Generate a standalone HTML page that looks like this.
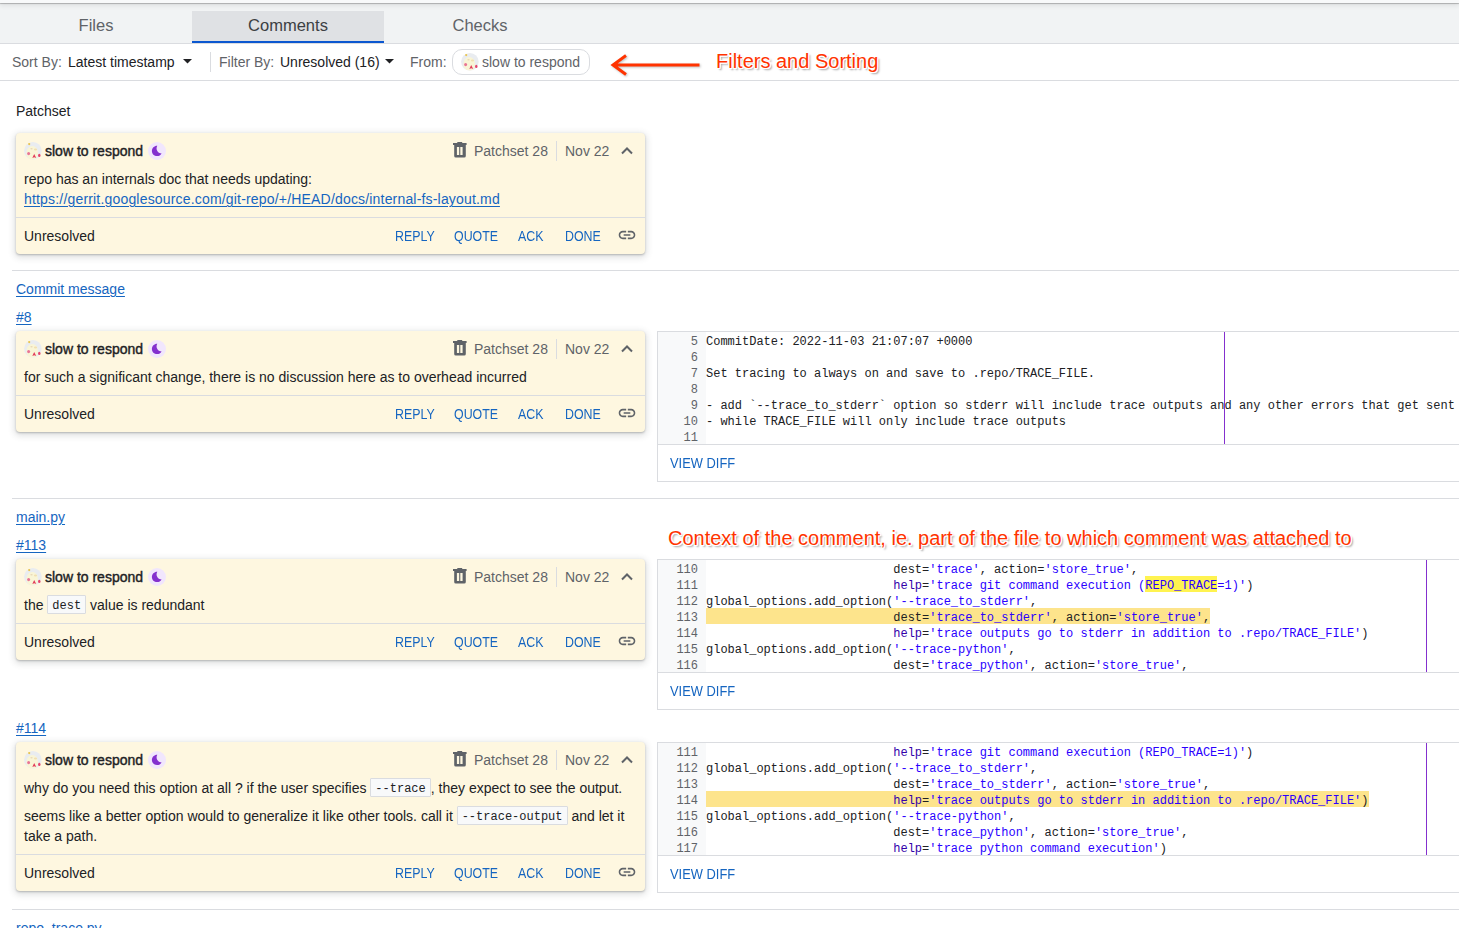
<!DOCTYPE html>
<html><head><meta charset="utf-8">
<style>
*{box-sizing:border-box}
html,body{margin:0;padding:0}
body{width:1459px;height:928px;overflow:hidden;position:relative;background:#fff;font-family:"Liberation Sans",sans-serif;color:#202124;font-size:14px}
.a{position:absolute;white-space:pre}
.t14{font-size:14px;line-height:20px;height:20px}
.lnk{color:#1565c0;text-decoration:underline;text-underline-offset:1.5px;text-decoration-thickness:1px}
.topbar{position:absolute;left:0;top:0;width:1459px;height:3px;background:#f8f9fa;box-shadow:0 1px 1px rgba(0,0,0,.25),0 2px 5px rgba(0,0,0,.12);z-index:2}
.tabs{position:absolute;left:0;top:3px;width:1459px;height:41px;background:#f1f3f4;border-bottom:1px solid #dadce0}
.tab{position:absolute;top:8px;width:192px;height:32px;text-align:center;font-size:16.5px;line-height:20px;padding-top:4px;color:#5f6368}
.tab.sel{background:#dfe1e4;color:#3c4043}
.tabbar{position:absolute;left:192px;top:41px;width:192px;height:2px;background:#0b57d0}
.fbar{position:absolute;left:0;top:44px;width:1459px;height:37px;border-bottom:1px solid #dadce0}
.lab{color:#5f6368}
.nm{-webkit-text-stroke:0.4px #202124;letter-spacing:0}
.sep{position:absolute;left:12px;width:1447px;height:1px;background:#dadce0}
.card{position:absolute;left:16px;width:629px;background:#fef7e0;border-radius:4px;box-shadow:0 1px 2px rgba(60,64,67,.3),0 2px 6px 2px rgba(60,64,67,.15)}
.bd{line-height:20px;white-space:normal}
.btn{color:#1565c0;transform:scaleX(0.885);transform-origin:0 0}
.vdf{color:#1565c0;transform:scaleX(0.92);transform-origin:0 0}
.box{position:absolute;left:657px;width:820px;border:1px solid #dadce0;background:#fff}
.gut{width:48px;height:112px;background:#f8f9fa}
.ln{width:40px;text-align:right;color:#5f6368;font-family:"Liberation Mono",monospace;font-size:12px;line-height:16px}
.cd{font-family:"Liberation Mono",monospace;font-size:12px;line-height:16px;color:#202124}
.s{color:#2a00ff}
.b{color:#3300aa}
.hl2{background:#fff350}
.ic{display:inline-block;font-family:"Liberation Mono",monospace;font-size:12px;height:19px;line-height:21px;background:#f8f9fa;border:1px solid #dadce0;border-radius:1px;padding:0 4px;vertical-align:1px;overflow:visible}
.ann{position:absolute;color:#ff3300;font-size:20px;line-height:24px;white-space:pre;text-shadow:-1px 0 0 #fff,1px 0 0 #fff,0 -1px 0 #fff,0 1px 0 #fff,1px 1px 0 #fff,-1px -1px 0 #fff,1px -1px 0 #fff,-1px 1px 0 #fff,2px 2px 2px rgba(0,0,0,.4)}

</style></head>
<body>
<div class="topbar"></div>
<div class="tabs">
  <div class="tab" style="left:0">Files</div>
  <div class="tab sel" style="left:192px">Comments</div>
  <div class="tab" style="left:384px">Checks</div>
</div>
<div class="tabbar"></div>
<div class="fbar"></div>
<div class="a t14 lab" style="left:12px;top:52px">Sort By:</div>
<div class="a t14" style="left:68px;top:52px">Latest timestamp</div>
<svg class="a" style="left:183px;top:59px" width="9" height="5" viewBox="0 0 9 5"><path d="M0 0h9L4.5 4.6z" fill="#202124"/></svg>
<div class="a" style="left:210px;top:52px;width:1px;height:20px;background:#dadce0"></div>
<div class="a t14 lab" style="left:219px;top:52px">Filter By:</div>
<div class="a t14" style="left:280px;top:52px">Unresolved (16)</div>
<svg class="a" style="left:385px;top:59px" width="9" height="5" viewBox="0 0 9 5"><path d="M0 0h9L4.5 4.6z" fill="#202124"/></svg>
<div class="a t14 lab" style="left:410px;top:52px">From:</div>
<div class="a" style="left:452px;top:49px;width:138px;height:26px;border:1px solid #dadce0;border-radius:10px"></div>
<svg class="a" style="left:461px;top:53px" width="18" height="18" viewBox="0 0 18 18"><defs><clipPath id="avc1"><circle cx="8.9" cy="8.8" r="8.8"/></clipPath></defs><circle cx="8.9" cy="8.8" r="8.8" fill="#e9ecf0"/><g clip-path="url(#avc1)"><ellipse cx="8.2" cy="11" rx="5.8" ry="6.9" fill="#f9f5d6"/><ellipse cx="11.5" cy="7.5" rx="1.6" ry="1" fill="#f1dfb0"/><ellipse cx="7.5" cy="6.8" rx="1.2" ry="0.7" fill="#e8d8b8"/></g><ellipse cx="4.6" cy="11.6" rx="1.5" ry="1.6" fill="#e97595"/><path d="M8.3 15.9L10.2 11.9L12.2 15.9L10.2 15.2z" fill="#e23b5a"/><ellipse cx="15.3" cy="13.4" rx="1.2" ry="1.6" fill="#e5456a"/><circle cx="5.2" cy="2.1" r="1.1" fill="#e9c44a"/></svg>
<div class="a t14 lab" style="left:482px;top:52px">slow to respond</div>
<svg class="a" style="left:608px;top:52px" width="96" height="26" viewBox="0 0 96 26"><g fill="none" stroke="#ff3300" stroke-width="3" stroke-linecap="butt" stroke-linejoin="miter" style="filter:drop-shadow(1px 1px 1px rgba(0,0,0,.25))"><path d="M91.5 13H5M18 3.5L5 13L18 22.5"/></g></svg>
<div class="ann" style="left:716px;top:49px">Filters and Sorting</div>

<div class="a t14" style="left:16px;top:101px">Patchset</div>
<div class="card" style="top:133px;height:121px"></div>
<svg class="a" style="left:24px;top:142px" width="18" height="18" viewBox="0 0 18 18"><defs><clipPath id="avc2"><circle cx="8.9" cy="8.8" r="8.8"/></clipPath></defs><circle cx="8.9" cy="8.8" r="8.8" fill="#e9ecf0"/><g clip-path="url(#avc2)"><ellipse cx="8.2" cy="11" rx="5.8" ry="6.9" fill="#f9f5d6"/><ellipse cx="11.5" cy="7.5" rx="1.6" ry="1" fill="#f1dfb0"/><ellipse cx="7.5" cy="6.8" rx="1.2" ry="0.7" fill="#e8d8b8"/></g><ellipse cx="4.6" cy="11.6" rx="1.5" ry="1.6" fill="#e97595"/><path d="M8.3 15.9L10.2 11.9L12.2 15.9L10.2 15.2z" fill="#e23b5a"/><ellipse cx="15.3" cy="13.4" rx="1.2" ry="1.6" fill="#e5456a"/><circle cx="5.2" cy="2.1" r="1.1" fill="#e9c44a"/></svg>
<div class="a t14 nm" style="left:45px;top:141px">slow to respond</div>
<svg class="a" style="left:148px;top:142px" width="18" height="18" viewBox="0 0 18 18"><circle cx="9" cy="9" r="9" fill="#f1e6fd"/><path transform="translate(3.9 3.7) scale(0.52) translate(-2 -2)" d="M12.34 2.02C6.59 1.82 2 6.42 2 12c0 5.52 4.48 10 10 10 3.71 0 6.93-2.02 8.66-5.02-7.51-.25-12.09-8.43-8.32-14.96z" fill="#8430ce"/></svg>
<svg class="a" style="left:453px;top:142px" width="14" height="16" viewBox="0 0 14 16"><path fill="#5f6368" fill-rule="evenodd" d="M4.3 0h4.9v1H13.6v2H0v-2H4.3z M1.2 3H12.8V14a1.6 1.6 0 0 1 -1.6 1.6H2.8A1.6 1.6 0 0 1 1.2 14z M3.9 4.9v8h2.3v-8z M7.3 4.9v8h2.3v-8z"/></svg>
<div class="a t14 lab" style="left:474px;top:141px">Patchset 28</div>
<div class="a" style="left:556px;top:141px;width:1px;height:20px;background:#dadce0"></div>
<div class="a t14 lab" style="left:565px;top:141px">Nov 22</div>
<svg class="a" style="left:621px;top:147px" width="12" height="8" viewBox="0 0 12 8"><path d="M1 6.5L6 1.5L11 6.5" fill="none" stroke="#5f6368" stroke-width="2"/></svg>
<div class="a bd" style="left:24px;top:169px;width:615px">repo has an internals doc that needs updating:<br><span class="lnk" style="letter-spacing:0.18px">https://gerrit.googlesource.com/git-repo/+/HEAD/docs/internal-fs-layout.md</span></div>
<div class="a" style="left:16px;top:217px;width:629px;height:1px;background:#dadce0"></div>
<div class="a t14" style="left:24px;top:226px">Unresolved</div>
<div class="a t14 btn" style="left:395px;top:226px">REPLY</div>
<div class="a t14 btn" style="left:454px;top:226px">QUOTE</div>
<div class="a t14 btn" style="left:518px;top:226px">ACK</div>
<div class="a t14 btn" style="left:565px;top:226px">DONE</div>
<svg class="a" style="left:617px;top:225px" width="20" height="20" viewBox="0 0 24 24"><path fill="#5f6368" d="M3.9 12c0-1.71 1.39-3.1 3.1-3.1h4V7H7c-2.76 0-5 2.24-5 5s2.24 5 5 5h4v-1.9H7c-1.71 0-3.1-1.39-3.1-3.1zM8 13h8v-2H8v2zm9-6h-4v1.9h4c1.71 0 3.1 1.39 3.1 3.1s-1.39 3.1-3.1 3.1h-4V17h4c2.76 0 5-2.24 5-5s-2.24-5-5-5z"/></svg>
<div class="sep" style="top:270px"></div>
<div class="a t14 lnk" style="left:16px;top:279px">Commit message</div>
<div class="a t14 lnk" style="left:16px;top:307px">#8</div>
<div class="card" style="top:331px;height:101px"></div>
<svg class="a" style="left:24px;top:340px" width="18" height="18" viewBox="0 0 18 18"><defs><clipPath id="avc3"><circle cx="8.9" cy="8.8" r="8.8"/></clipPath></defs><circle cx="8.9" cy="8.8" r="8.8" fill="#e9ecf0"/><g clip-path="url(#avc3)"><ellipse cx="8.2" cy="11" rx="5.8" ry="6.9" fill="#f9f5d6"/><ellipse cx="11.5" cy="7.5" rx="1.6" ry="1" fill="#f1dfb0"/><ellipse cx="7.5" cy="6.8" rx="1.2" ry="0.7" fill="#e8d8b8"/></g><ellipse cx="4.6" cy="11.6" rx="1.5" ry="1.6" fill="#e97595"/><path d="M8.3 15.9L10.2 11.9L12.2 15.9L10.2 15.2z" fill="#e23b5a"/><ellipse cx="15.3" cy="13.4" rx="1.2" ry="1.6" fill="#e5456a"/><circle cx="5.2" cy="2.1" r="1.1" fill="#e9c44a"/></svg>
<div class="a t14 nm" style="left:45px;top:339px">slow to respond</div>
<svg class="a" style="left:148px;top:340px" width="18" height="18" viewBox="0 0 18 18"><circle cx="9" cy="9" r="9" fill="#f1e6fd"/><path transform="translate(3.9 3.7) scale(0.52) translate(-2 -2)" d="M12.34 2.02C6.59 1.82 2 6.42 2 12c0 5.52 4.48 10 10 10 3.71 0 6.93-2.02 8.66-5.02-7.51-.25-12.09-8.43-8.32-14.96z" fill="#8430ce"/></svg>
<svg class="a" style="left:453px;top:340px" width="14" height="16" viewBox="0 0 14 16"><path fill="#5f6368" fill-rule="evenodd" d="M4.3 0h4.9v1H13.6v2H0v-2H4.3z M1.2 3H12.8V14a1.6 1.6 0 0 1 -1.6 1.6H2.8A1.6 1.6 0 0 1 1.2 14z M3.9 4.9v8h2.3v-8z M7.3 4.9v8h2.3v-8z"/></svg>
<div class="a t14 lab" style="left:474px;top:339px">Patchset 28</div>
<div class="a" style="left:556px;top:339px;width:1px;height:20px;background:#dadce0"></div>
<div class="a t14 lab" style="left:565px;top:339px">Nov 22</div>
<svg class="a" style="left:621px;top:345px" width="12" height="8" viewBox="0 0 12 8"><path d="M1 6.5L6 1.5L11 6.5" fill="none" stroke="#5f6368" stroke-width="2"/></svg>
<div class="a bd" style="left:24px;top:367px;width:615px">for such a significant change, there is no discussion here as to overhead incurred</div>
<div class="a" style="left:16px;top:395px;width:629px;height:1px;background:#dadce0"></div>
<div class="a t14" style="left:24px;top:404px">Unresolved</div>
<div class="a t14 btn" style="left:395px;top:404px">REPLY</div>
<div class="a t14 btn" style="left:454px;top:404px">QUOTE</div>
<div class="a t14 btn" style="left:518px;top:404px">ACK</div>
<div class="a t14 btn" style="left:565px;top:404px">DONE</div>
<svg class="a" style="left:617px;top:403px" width="20" height="20" viewBox="0 0 24 24"><path fill="#5f6368" d="M3.9 12c0-1.71 1.39-3.1 3.1-3.1h4V7H7c-2.76 0-5 2.24-5 5s2.24 5 5 5h4v-1.9H7c-1.71 0-3.1-1.39-3.1-3.1zM8 13h8v-2H8v2zm9-6h-4v1.9h4c1.71 0 3.1 1.39 3.1 3.1s-1.39 3.1-3.1 3.1h-4V17h4c2.76 0 5-2.24 5-5s-2.24-5-5-5z"/></svg>
<div class="box" style="top:331px;height:151px"></div>
<div class="a gut" style="left:658px;top:332px"></div>
<div class="a ln" style="left:658px;top:334px">5</div>
<div class="a cd" style="left:706px;top:334px">CommitDate: 2022-11-03 21:07:07 +0000</div>
<div class="a ln" style="left:658px;top:350px">6</div>
<div class="a cd" style="left:706px;top:350px"></div>
<div class="a ln" style="left:658px;top:366px">7</div>
<div class="a cd" style="left:706px;top:366px">Set tracing to always on and save to .repo/TRACE_FILE.</div>
<div class="a ln" style="left:658px;top:382px">8</div>
<div class="a cd" style="left:706px;top:382px"></div>
<div class="a ln" style="left:658px;top:398px">9</div>
<div class="a cd" style="left:706px;top:398px">- add `--trace_to_stderr` option so stderr will include trace outputs and any other errors that get sent</div>
<div class="a ln" style="left:658px;top:414px">10</div>
<div class="a cd" style="left:706px;top:414px">- while TRACE_FILE will only include trace outputs</div>
<div class="a ln" style="left:658px;top:430px">11</div>
<div class="a cd" style="left:706px;top:430px"></div>
<div class="a" style="left:1224px;top:332px;width:1px;height:112px;background:#8430ce"></div>
<div class="a" style="left:658px;top:444px;width:801px;height:1px;background:#dadce0"></div>
<div class="a t14 vdf" style="left:670px;top:453px">VIEW DIFF</div>
<div class="sep" style="top:498px"></div>
<div class="a t14 lnk" style="left:16px;top:507px">main.py</div>
<div class="a t14 lnk" style="left:16px;top:535px">#113</div>
<div class="card" style="top:559px;height:101px"></div>
<svg class="a" style="left:24px;top:568px" width="18" height="18" viewBox="0 0 18 18"><defs><clipPath id="avc4"><circle cx="8.9" cy="8.8" r="8.8"/></clipPath></defs><circle cx="8.9" cy="8.8" r="8.8" fill="#e9ecf0"/><g clip-path="url(#avc4)"><ellipse cx="8.2" cy="11" rx="5.8" ry="6.9" fill="#f9f5d6"/><ellipse cx="11.5" cy="7.5" rx="1.6" ry="1" fill="#f1dfb0"/><ellipse cx="7.5" cy="6.8" rx="1.2" ry="0.7" fill="#e8d8b8"/></g><ellipse cx="4.6" cy="11.6" rx="1.5" ry="1.6" fill="#e97595"/><path d="M8.3 15.9L10.2 11.9L12.2 15.9L10.2 15.2z" fill="#e23b5a"/><ellipse cx="15.3" cy="13.4" rx="1.2" ry="1.6" fill="#e5456a"/><circle cx="5.2" cy="2.1" r="1.1" fill="#e9c44a"/></svg>
<div class="a t14 nm" style="left:45px;top:567px">slow to respond</div>
<svg class="a" style="left:148px;top:568px" width="18" height="18" viewBox="0 0 18 18"><circle cx="9" cy="9" r="9" fill="#f1e6fd"/><path transform="translate(3.9 3.7) scale(0.52) translate(-2 -2)" d="M12.34 2.02C6.59 1.82 2 6.42 2 12c0 5.52 4.48 10 10 10 3.71 0 6.93-2.02 8.66-5.02-7.51-.25-12.09-8.43-8.32-14.96z" fill="#8430ce"/></svg>
<svg class="a" style="left:453px;top:568px" width="14" height="16" viewBox="0 0 14 16"><path fill="#5f6368" fill-rule="evenodd" d="M4.3 0h4.9v1H13.6v2H0v-2H4.3z M1.2 3H12.8V14a1.6 1.6 0 0 1 -1.6 1.6H2.8A1.6 1.6 0 0 1 1.2 14z M3.9 4.9v8h2.3v-8z M7.3 4.9v8h2.3v-8z"/></svg>
<div class="a t14 lab" style="left:474px;top:567px">Patchset 28</div>
<div class="a" style="left:556px;top:567px;width:1px;height:20px;background:#dadce0"></div>
<div class="a t14 lab" style="left:565px;top:567px">Nov 22</div>
<svg class="a" style="left:621px;top:573px" width="12" height="8" viewBox="0 0 12 8"><path d="M1 6.5L6 1.5L11 6.5" fill="none" stroke="#5f6368" stroke-width="2"/></svg>
<div class="a bd" style="left:24px;top:595px;width:615px">the <span class="ic">dest</span> value is redundant</div>
<div class="a" style="left:16px;top:623px;width:629px;height:1px;background:#dadce0"></div>
<div class="a t14" style="left:24px;top:632px">Unresolved</div>
<div class="a t14 btn" style="left:395px;top:632px">REPLY</div>
<div class="a t14 btn" style="left:454px;top:632px">QUOTE</div>
<div class="a t14 btn" style="left:518px;top:632px">ACK</div>
<div class="a t14 btn" style="left:565px;top:632px">DONE</div>
<svg class="a" style="left:617px;top:631px" width="20" height="20" viewBox="0 0 24 24"><path fill="#5f6368" d="M3.9 12c0-1.71 1.39-3.1 3.1-3.1h4V7H7c-2.76 0-5 2.24-5 5s2.24 5 5 5h4v-1.9H7c-1.71 0-3.1-1.39-3.1-3.1zM8 13h8v-2H8v2zm9-6h-4v1.9h4c1.71 0 3.1 1.39 3.1 3.1s-1.39 3.1-3.1 3.1h-4V17h4c2.76 0 5-2.24 5-5s-2.24-5-5-5z"/></svg>
<div class="box" style="top:559px;height:151px"></div>
<div class="a" style="left:1145px;top:576px;width:72px;height:16px;background:#fff350"></div>
<div class="a gut" style="left:658px;top:560px"></div>
<div class="a ln" style="left:658px;top:562px">110</div>
<div class="a cd" style="left:706px;top:562px">                          dest=<span class="s">'trace'</span>, action=<span class="s">'store_true'</span>,</div>
<div class="a ln" style="left:658px;top:578px">111</div>
<div class="a cd" style="left:706px;top:578px">                          <span class="b">help</span>=<span class="s">'trace git command execution (</span><span class="s">REPO_TRACE</span><span class="s">=1)'</span>)</div>
<div class="a ln" style="left:658px;top:594px">112</div>
<div class="a cd" style="left:706px;top:594px">global_options.add_option(<span class="s">'--trace_to_stderr'</span>,</div>
<div class="a" style="left:706px;top:608px;width:504px;height:16px;background:#fde48c"></div>
<div class="a ln" style="left:658px;top:610px">113</div>
<div class="a cd" style="left:706px;top:610px">                          dest=<span class="s">'trace_to_stderr'</span>, action=<span class="s">'store_true'</span>,</div>
<div class="a ln" style="left:658px;top:626px">114</div>
<div class="a cd" style="left:706px;top:626px">                          <span class="b">help</span>=<span class="s">'trace outputs go to stderr in addition to .repo/TRACE_FILE'</span>)</div>
<div class="a ln" style="left:658px;top:642px">115</div>
<div class="a cd" style="left:706px;top:642px">global_options.add_option(<span class="s">'--trace-python'</span>,</div>
<div class="a ln" style="left:658px;top:658px">116</div>
<div class="a cd" style="left:706px;top:658px">                          dest=<span class="s">'trace_python'</span>, action=<span class="s">'store_true'</span>,</div>
<div class="a" style="left:1426px;top:560px;width:1px;height:112px;background:#8430ce"></div>
<div class="a" style="left:658px;top:672px;width:801px;height:1px;background:#dadce0"></div>
<div class="a t14 vdf" style="left:670px;top:681px">VIEW DIFF</div>
<div class="ann" style="left:668px;top:526px">Context of the comment, ie. part of the file to which comment was attached to</div>
<div class="a t14 lnk" style="left:16px;top:718px">#114</div>
<div class="card" style="top:742px;height:149px"></div>
<svg class="a" style="left:24px;top:751px" width="18" height="18" viewBox="0 0 18 18"><defs><clipPath id="avc5"><circle cx="8.9" cy="8.8" r="8.8"/></clipPath></defs><circle cx="8.9" cy="8.8" r="8.8" fill="#e9ecf0"/><g clip-path="url(#avc5)"><ellipse cx="8.2" cy="11" rx="5.8" ry="6.9" fill="#f9f5d6"/><ellipse cx="11.5" cy="7.5" rx="1.6" ry="1" fill="#f1dfb0"/><ellipse cx="7.5" cy="6.8" rx="1.2" ry="0.7" fill="#e8d8b8"/></g><ellipse cx="4.6" cy="11.6" rx="1.5" ry="1.6" fill="#e97595"/><path d="M8.3 15.9L10.2 11.9L12.2 15.9L10.2 15.2z" fill="#e23b5a"/><ellipse cx="15.3" cy="13.4" rx="1.2" ry="1.6" fill="#e5456a"/><circle cx="5.2" cy="2.1" r="1.1" fill="#e9c44a"/></svg>
<div class="a t14 nm" style="left:45px;top:750px">slow to respond</div>
<svg class="a" style="left:148px;top:751px" width="18" height="18" viewBox="0 0 18 18"><circle cx="9" cy="9" r="9" fill="#f1e6fd"/><path transform="translate(3.9 3.7) scale(0.52) translate(-2 -2)" d="M12.34 2.02C6.59 1.82 2 6.42 2 12c0 5.52 4.48 10 10 10 3.71 0 6.93-2.02 8.66-5.02-7.51-.25-12.09-8.43-8.32-14.96z" fill="#8430ce"/></svg>
<svg class="a" style="left:453px;top:751px" width="14" height="16" viewBox="0 0 14 16"><path fill="#5f6368" fill-rule="evenodd" d="M4.3 0h4.9v1H13.6v2H0v-2H4.3z M1.2 3H12.8V14a1.6 1.6 0 0 1 -1.6 1.6H2.8A1.6 1.6 0 0 1 1.2 14z M3.9 4.9v8h2.3v-8z M7.3 4.9v8h2.3v-8z"/></svg>
<div class="a t14 lab" style="left:474px;top:750px">Patchset 28</div>
<div class="a" style="left:556px;top:750px;width:1px;height:20px;background:#dadce0"></div>
<div class="a t14 lab" style="left:565px;top:750px">Nov 22</div>
<svg class="a" style="left:621px;top:756px" width="12" height="8" viewBox="0 0 12 8"><path d="M1 6.5L6 1.5L11 6.5" fill="none" stroke="#5f6368" stroke-width="2"/></svg>
<div class="a bd" style="left:24px;top:778px;width:615px"><div>why do you need this option at all ? if the user specifies <span class="ic">--trace</span>, they expect to see the output.</div><div style="margin-top:8px">seems like a better option would to generalize it like other tools. call it <span class="ic">--trace-output</span> and let it<br>take a path.</div></div>
<div class="a" style="left:16px;top:854px;width:629px;height:1px;background:#dadce0"></div>
<div class="a t14" style="left:24px;top:863px">Unresolved</div>
<div class="a t14 btn" style="left:395px;top:863px">REPLY</div>
<div class="a t14 btn" style="left:454px;top:863px">QUOTE</div>
<div class="a t14 btn" style="left:518px;top:863px">ACK</div>
<div class="a t14 btn" style="left:565px;top:863px">DONE</div>
<svg class="a" style="left:617px;top:862px" width="20" height="20" viewBox="0 0 24 24"><path fill="#5f6368" d="M3.9 12c0-1.71 1.39-3.1 3.1-3.1h4V7H7c-2.76 0-5 2.24-5 5s2.24 5 5 5h4v-1.9H7c-1.71 0-3.1-1.39-3.1-3.1zM8 13h8v-2H8v2zm9-6h-4v1.9h4c1.71 0 3.1 1.39 3.1 3.1s-1.39 3.1-3.1 3.1h-4V17h4c2.76 0 5-2.24 5-5s-2.24-5-5-5z"/></svg>
<div class="box" style="top:742px;height:151px"></div>
<div class="a gut" style="left:658px;top:743px"></div>
<div class="a ln" style="left:658px;top:745px">111</div>
<div class="a cd" style="left:706px;top:745px">                          <span class="b">help</span>=<span class="s">'trace git command execution (REPO_TRACE=1)'</span>)</div>
<div class="a ln" style="left:658px;top:761px">112</div>
<div class="a cd" style="left:706px;top:761px">global_options.add_option(<span class="s">'--trace_to_stderr'</span>,</div>
<div class="a ln" style="left:658px;top:777px">113</div>
<div class="a cd" style="left:706px;top:777px">                          dest=<span class="s">'trace_to_stderr'</span>, action=<span class="s">'store_true'</span>,</div>
<div class="a" style="left:706px;top:791px;width:663px;height:16px;background:#fde48c"></div>
<div class="a ln" style="left:658px;top:793px">114</div>
<div class="a cd" style="left:706px;top:793px">                          <span class="b">help</span>=<span class="s">'trace outputs go to stderr in addition to .repo/TRACE_FILE'</span>)</div>
<div class="a ln" style="left:658px;top:809px">115</div>
<div class="a cd" style="left:706px;top:809px">global_options.add_option(<span class="s">'--trace-python'</span>,</div>
<div class="a ln" style="left:658px;top:825px">116</div>
<div class="a cd" style="left:706px;top:825px">                          dest=<span class="s">'trace_python'</span>, action=<span class="s">'store_true'</span>,</div>
<div class="a ln" style="left:658px;top:841px">117</div>
<div class="a cd" style="left:706px;top:841px">                          <span class="b">help</span>=<span class="s">'trace python command execution'</span>)</div>
<div class="a" style="left:1426px;top:743px;width:1px;height:112px;background:#8430ce"></div>
<div class="a" style="left:658px;top:855px;width:801px;height:1px;background:#dadce0"></div>
<div class="a t14 vdf" style="left:670px;top:864px">VIEW DIFF</div>
<div class="sep" style="top:909px"></div>
<div class="a t14 lnk" style="left:16px;top:918px">repo_trace.py</div>
</body></html>
